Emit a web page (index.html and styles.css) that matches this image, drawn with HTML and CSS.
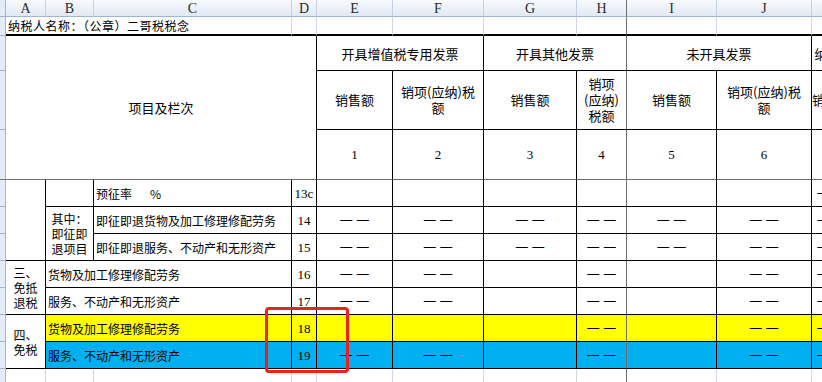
FILE: index.html
```html
<!DOCTYPE html>
<html lang="zh-CN">
<head>
<meta charset="utf-8">
<title>增值税纳税申报表附列资料</title>
<link rel="stylesheet" href="styles.css">
</head>
<body>
<div class="sheet">
  <!-- column header row -->
  <div class="rh corner"></div>
  <div class="ch">A</div><div class="ch">B</div><div class="ch">C</div><div class="ch">D</div>
  <div class="ch">E</div><div class="ch">F</div><div class="ch">G</div><div class="ch fz">H</div>
  <div class="ch">I</div><div class="ch">J</div><div class="ch">K</div><div class="ch">L</div>

  <!-- row 1 -->
  <div class="rh"></div>
  <div class="r1 c3 left name">纳税人名称：（公章）二哥税税念</div>
  <div class="r1"></div><div class="r1"></div><div class="r1"></div><div class="r1"></div>
  <div class="r1 fz"></div><div class="r1"></div><div class="r1"></div><div class="r1"></div><div class="r1"></div>

  <!-- row 2 -->
  <div class="rh"></div>
  <div class="t c4 r3 fzb big">项目及栏次</div>
  <div class="t c2 big">开具增值税专用发票</div>
  <div class="t c2 fz big">开具其他发票</div>
  <div class="t c2 big">未开具发票</div>
  <div class="t c2 big">纳税检查调整</div>

  <!-- row 3 -->
  <div class="rh"></div>
  <div class="t hd">销售额</div>
  <div class="t hd">销项(应纳)税<br>额</div>
  <div class="t hd">销售额</div>
  <div class="t hd fz">销项<br>(应纳)<br>税额</div>
  <div class="t hd">销售额</div>
  <div class="t hd">销项(应纳)税<br>额</div>
  <div class="t hd">销售额</div>
  <div class="t hd">销项(应纳)税<br>额</div>

  <!-- row 4 -->
  <div class="rh fzb"></div>
  <div class="t n fzb">1</div><div class="t n fzb">2</div><div class="t n fzb">3</div><div class="t n fzb fz">4</div>
  <div class="t n fzb">5</div><div class="t n fzb">6</div><div class="t n fzb">7</div><div class="t n fzb">8=1+3+5+7</div>

  <!-- row 13c -->
  <div class="rh"></div>
  <div class="t r3"></div>
  <div class="t"></div>
  <div class="t left">预征率&emsp;&ensp;%</div>
  <div class="t n">13c</div>
  <div class="t"></div><div class="t"></div><div class="t"></div><div class="t fz"></div>
  <div class="t"></div><div class="t"></div><div class="t d">— —</div><div class="t d">— —</div>

  <!-- row 14 -->
  <div class="rh"></div>
  <div class="t r2">其中：<br>即征即<br>退项目</div>
  <div class="t left">即征即退货物及加工修理修配劳务</div>
  <div class="t n">14</div>
  <div class="t d">— —</div><div class="t d">— —</div><div class="t d">— —</div><div class="t d fz">— —</div>
  <div class="t d">— —</div><div class="t d">— —</div><div class="t d">— —</div><div class="t d">— —</div>

  <!-- row 15 -->
  <div class="rh"></div>
  <div class="t left">即征即退服务、不动产和无形资产</div>
  <div class="t n">15</div>
  <div class="t d">— —</div><div class="t d">— —</div><div class="t d">— —</div><div class="t d fz">— —</div>
  <div class="t d">— —</div><div class="t d">— —</div><div class="t d">— —</div><div class="t d">— —</div>

  <!-- row 16 -->
  <div class="rh"></div>
  <div class="t r2">三、<br>免抵<br>退税</div>
  <div class="t c2 left">货物及加工修理修配劳务</div>
  <div class="t n">16</div>
  <div class="t d">— —</div><div class="t d">— —</div><div class="t"></div><div class="t d fz">— —</div>
  <div class="t"></div><div class="t d">— —</div><div class="t d">— —</div><div class="t d">— —</div>

  <!-- row 17 -->
  <div class="rh"></div>
  <div class="t c2 left">服务、不动产和无形资产</div>
  <div class="t n">17</div>
  <div class="t d">— —</div><div class="t d">— —</div><div class="t"></div><div class="t d fz">— —</div>
  <div class="t"></div><div class="t d">— —</div><div class="t d">— —</div><div class="t d">— —</div>

  <!-- row 18 -->
  <div class="rh"></div>
  <div class="t r2">四、<br>免税</div>
  <div class="t c2 left yl">货物及加工修理修配劳务</div>
  <div class="t n yl">18</div>
  <div class="t yl"></div><div class="t yl"></div><div class="t yl"></div><div class="t d yl fz">— —</div>
  <div class="t yl"></div><div class="t d yl">— —</div><div class="t d yl">— —</div><div class="t d yl">— —</div>

  <!-- row 19 -->
  <div class="rh"></div>
  <div class="t c2 left bl">服务、不动产和无形资产</div>
  <div class="t n bl">19</div>
  <div class="t d bl">— —</div><div class="t d bl">— —</div><div class="t bl"></div><div class="t d bl fz">— —</div>
  <div class="t bl"></div><div class="t d bl">— —</div><div class="t d bl">— —</div><div class="t d bl">— —</div>

  <!-- empty row -->
  <div class="rh"></div>
  <div class="g"></div><div class="g"></div><div class="g"></div><div class="g"></div>
  <div class="g"></div><div class="g"></div><div class="g"></div><div class="g fz"></div>
  <div class="g"></div><div class="g"></div><div class="g"></div><div class="g"></div>
</div>
<div class="mark"></div>
</body>
</html>
```

FILE: styles.css
```css
* { box-sizing: border-box; }
html, body { margin: 0; padding: 0; }
body {
  width: 822px;
  height: 382px;
  overflow: hidden;
  position: relative;
  background: #fff;
  color: #000;
  font-family: "Noto Sans CJK SC", "Liberation Sans", sans-serif;
  font-size: 12px;
}
.sheet {
  display: grid;
  grid-template-columns: 6px 40px 48px 198px 25px 76px 91px 93px 50px 90px 95px 40px 44px;
  grid-template-rows: 17px 19px 35px 59px 50px repeat(7, 27px) 30px;
}
.sheet > div {
  display: flex;
  align-items: center;
  justify-content: center;
  text-align: center;
  line-height: 15px;
  overflow: hidden;
  white-space: nowrap;
}
.ch {
  background: linear-gradient(#f8fafd, #e2e9f3);
  border-right: 1px solid #c3d1e3;
  border-bottom: 1px solid #9eb6ce;
  font-family: "Liberation Serif", serif;
  font-size: 14px;
  color: #2a2a2a;
}
.rh {
  background: #e4ecf7;
  border-right: 1px solid #9eb6ce;
  border-bottom: 1px solid #9eb6ce;
}
.r1 {
  border-right: 1px solid #d0d7e5;
  border-bottom: 2px solid #000;
}
.t {
  border-right: 1px solid #000;
  border-bottom: 1px solid #000;
}
.g {
  border-right: 1px solid #d0d7e5;
}
.sheet > .left { justify-content: flex-start; padding-left: 2px; }
.sheet > .name { letter-spacing: 0.5px; }
.sheet > .big { font-size: 13px; }
.sheet > .hd { font-size: 13px; line-height: 16px; }
.n { font-family: "Liberation Serif", serif; font-size: 13px; }
.d { font-family: "Liberation Sans", sans-serif; font-size: 12px; word-spacing: 1px; }
.c2 { grid-column: span 2; }
.c3 { grid-column: span 3; }
.c4 { grid-column: span 4; }
.r2 { grid-row: span 2; }
.r3 { grid-row: span 3; }
.yl { background: #ffff00; }
.bl { background: #00b0f0; }
.sheet > .fz { border-right-color: #6e6e6e; }
.sheet > .fzb { border-bottom-color: #6e6e6e; }
.mark {
  position: absolute;
  left: 265px;
  top: 307px;
  width: 84px;
  height: 66px;
  border: 3px solid #e8231a;
  border-radius: 4px;
}
```
